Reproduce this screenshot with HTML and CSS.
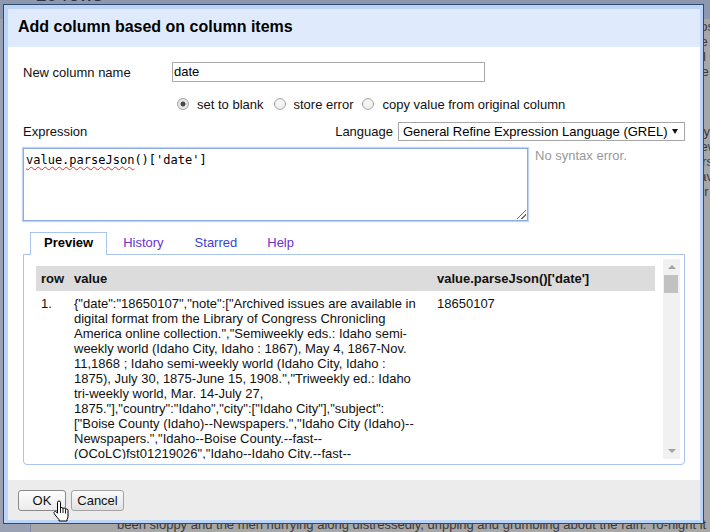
FILE: index.html
```html
<!DOCTYPE html>
<html>
<head>
<meta charset="utf-8">
<title>Add column based on column items</title>
<link rel="stylesheet" href="styles.css">
</head>
<body>
<div class="backdrop">
  <div class="bg-top"><span class="bg-rows">20 rows</span></div>
  <div class="bg-grid">
    <div class="bg-side"></div>
    <div class="bg-text">
      <p class="bg-filler">The weather has been very unpleasant for several days past, and the roads leading into town are almost impassable. Teams from the mines report heavy going, and many of the freighters have laid over at the crossing. Business on Main street has been dull, the merchants complaining that trade is at a standstill until the snow melts from the hills. A public meeting was held at the court house on Saturday evening for the purpose of taking steps toward the erection of a new school building. Judge Miller presided and a committee of five was appointed to solicit subscriptions. The stage from Boise arrived late on Tuesday, having been detained by high water at the ford. Among the passengers were several ladies bound for Placerville. The Independence Hose Company gave a ball at the hall on Friday night, which was largely attended and passed off pleasantly. Mining news from the upper creeks is encouraging, and several new claims have been located during the week. The ditch company expects to have water running by the first of next month. Mr. Jones, of the City Hotel, has refitted his dining room in handsome style. The streets have all day been sloppy and muddy, and the sidewalks crowded with miners down from the gulches waiting for the weather to clear.</p>
      <p class="bg-last">been sloppy and the men hurrying along distressedly, dripping and grumbling about the rain. To-night it is dolefully dolefully</p>
    </div>
  </div>
</div>

<div class="dialog">
  <div class="dialog-inner">
    <div class="title">Add column based on column items</div>
    <div class="body">
      <div class="row-name">
        <span class="label">New column name</span>
        <div class="input">date</div>
      </div>
      <div class="row-radios">
        <span class="radio on"></span><span class="rlabel">set to blank</span>
        <span class="radio"></span><span class="rlabel r2">store error</span>
        <span class="radio"></span><span class="rlabel">copy value from original column</span>
      </div>
      <div class="row-expr">
        <span class="grow">Expression</span>
        <span class="lang">Language</span>
        <div class="select"><span>General Refine Expression Language (GREL)</span><span class="arrow"></span></div>
      </div>
      <div class="row-code">
        <div class="code"><span class="squiggle">value.parseJson</span>()['date']</div>
        <div class="status">No syntax error.</div>
      </div>
      <div class="tabs">
        <span class="tab active">Preview</span>
        <span class="tab visited">History</span>
        <span class="tab link">Starred</span>
        <span class="tab visited">Help</span>
      </div>
      <div class="panel">
        <div class="preview">
          <table class="grid">
            <colgroup><col class="c-row"><col class="c-value"><col class="c-date"></colgroup>
            <thead>
              <tr><th>row</th><th>value</th><th>value.parseJson()['date']</th></tr>
            </thead>
            <tbody>
              <tr>
                <td>1.</td>
                <td class="json">{"date":"18650107","note":["Archived issues are available in<br>digital format from the Library of Congress Chronicling<br>America online collection.","Semiweekly eds.: Idaho semi-<br>weekly world (Idaho City, Idaho : 1867), May 4, 1867-Nov.<br>11,1868 ; Idaho semi-weekly world (Idaho City, Idaho :<br>1875), July 30, 1875-June 15, 1908.","Triweekly ed.: Idaho<br>tri-weekly world, Mar. 14-July 27,<br>1875."],"country":"Idaho","city":["Idaho City"],"subject":<br>["Boise County (Idaho)--Newspapers.","Idaho City (Idaho)--<br>Newspapers.","Idaho--Boise County.--fast--<br>(OCoLC)fst01219026","Idaho--Idaho City.--fast--<br>(OCoLC)fst01213962"]}</td>
                <td>18650107</td>
              </tr>
            </tbody>
          </table>
        </div>
        <div class="scrollbar">
          <span class="sb-btn"><span class="tri-up"></span></span>
          <span class="thumb"></span>
          <span class="sb-fill"></span>
          <span class="sb-btn"><span class="tri-down"></span></span>
        </div>
      </div>
    </div>
    <div class="footer">
      <button class="btn ok">OK</button>
      <button class="btn cancel">Cancel</button>
    </div>
  </div>
</div>

<svg class="cursor" width="17" height="22" viewBox="0 0 17 22">
  <path d="M4.5,2.5 Q4.5,1 6,1 Q7.5,1 7.5,2.5 L7.5,8.5 Q7.5,7.5 8.75,7.5 Q10,7.5 10,8.7 Q10,8 11.25,8 Q12.5,8 12.5,9.5 Q12.7,9 13.75,9 Q15,9 15,10.5 L15,16 Q15,18 14,19.5 L14,21 L6,21 L6,19.5 Q4.5,18 3,16 L1.2,13.5 Q0.5,12.3 1.6,11.6 Q2.6,11 3.5,12 L4.5,13.2 Z" fill="#fff" stroke="#000" stroke-width="1" stroke-linejoin="round"/>
  <path d="M7.5,8.5 L7.5,13 M10,8.7 L10,13 M12.5,9.5 L12.5,13.5" fill="none" stroke="#000" stroke-width="0.9"/>
</svg>
</body>
</html>
```
FILE: styles.css
```css
html, body {
  margin: 0;
  padding: 0;
}
body {
  width: 710px;
  height: 532px;
  overflow: hidden;
  background: #8e97b0;
  font-family: "Liberation Sans", Arial, sans-serif;
  font-size: 13px;
  color: #111;
}

/* ---------- backdrop (page under the dialog) ---------- */
.backdrop {
  width: 710px;
  height: 532px;
  overflow: hidden;
}
.bg-top {
  height: 19px;
  background: #8e97b0;
  padding-left: 36px;
  overflow: hidden;
}
.bg-rows {
  display: block;
  font-size: 19px;
  line-height: 19px;
  margin-top: -15px;
  color: #2c3246;
}
.bg-grid {
  display: flex;
  height: 513px;
  background: #a7a7a7;
}
.bg-side {
  width: 30px;
  flex: none;
  background: #9aa1b5;
  border-right: 1px solid #7f89a2;
}
.bg-text {
  flex: 1;
  padding-left: 86px;
  display: flex;
  flex-direction: column;
  overflow: hidden;
  color: #3a3a3a;
}
.bg-filler {
  margin: 0;
  width: 620px;
  height: 498px;
  overflow: hidden;
  line-height: 15px;
}
.bg-last {
  margin: 0;
  white-space: nowrap;
  line-height: 15px;
}

/* ---------- dialog ---------- */
.dialog {
  position: absolute;
  left: 3px;
  top: 4px;
  width: 701px;
  height: 520px;
  box-sizing: border-box;
  border: 1px solid #2f4a6a;
  background: #bcd4f7;
  padding: 4px 3px 3px 4px;
}
.dialog-inner {
  display: flex;
  flex-direction: column;
  height: 100%;
}
.title {
  flex: none;
  height: 38px;
  line-height: 36px;
  background: #dfebfd;
  padding-left: 10px;
  font-weight: bold;
  font-size: 16px;
  color: #000;
}
.body {
  flex: none;
  height: 433px;
  box-sizing: border-box;
  background: #fff;
  padding: 15px;
}

.row-name {
  display: grid;
  grid-template-columns: 149px 313px;
  align-items: center;
  height: 20px;
}
.input {
  box-sizing: border-box;
  height: 20px;
  border: 1px solid #a9a9a9;
  padding: 0 1px;
  line-height: 18px;
  color: #000;
}

.row-radios {
  margin-top: 14px;
  height: 16px;
  display: flex;
  align-items: center;
  padding-left: 154px;
}
.radio {
  box-sizing: border-box;
  width: 12px;
  height: 12px;
  border-radius: 50%;
  border: 1px solid #a8a8a8;
  background: radial-gradient(circle at 50% 40%, #fbfbfb 0%, #e4e4e4 100%);
  margin-right: 8px;
  flex: none;
}
.radio.on {
  background: radial-gradient(circle, #4a4a4a 0, #4a4a4a 2.2px, #e9e9e9 2.8px, #dcdcdc 100%);
}
.rlabel {
  margin-right: 10px;
}
.rlabel.r2 {
  margin-right: 9px;
}

.row-expr {
  margin-top: 10px;
  height: 19px;
  display: flex;
  align-items: center;
}
.grow {
  flex: 1;
}
.lang {
  margin-right: 5px;
}
.select {
  box-sizing: border-box;
  width: 287px;
  height: 19px;
  border: 1px solid #a6a6a6;
  padding: 0 6px 0 4px;
  display: flex;
  align-items: center;
  justify-content: space-between;
  color: #000;
}
.arrow {
  width: 0;
  height: 0;
  border-left: 3.5px solid transparent;
  border-right: 3.5px solid transparent;
  border-top: 5px solid #111;
}

.row-code {
  margin-top: 7px;
  display: flex;
  gap: 7px;
}
.code {
  position: relative;
  box-sizing: border-box;
  width: 505px;
  height: 73px;
  border: 1px solid #8aaae0;
  box-shadow: 0 0 1px 1px #c2d6f6;
  padding: 4px 2px;
  font-family: "DejaVu Sans Mono", "Liberation Mono", monospace;
  font-size: 12px;
  color: #000;
}
.code::after {
  content: "";
  position: absolute;
  right: 1px;
  bottom: 1px;
  width: 9px;
  height: 9px;
  background: linear-gradient(135deg, transparent 0, transparent 46%, #6f6f6f 46%, #6f6f6f 54%, transparent 54%, transparent 72%, #6f6f6f 72%, #6f6f6f 80%, transparent 80%);
}
.squiggle {
  text-decoration: underline wavy #e03030;
  text-decoration-thickness: 1px;
  text-underline-offset: 2px;
}
.status {
  color: #999;
  line-height: 15px;
}

.tabs {
  margin-top: 11px;
  height: 22px;
  display: flex;
  padding-left: 7px;
  position: relative;
  z-index: 1;
}
.tab {
  padding: 0 14px;
  margin-left: 2px;
  line-height: 22px;
}
.tab.active {
  box-sizing: border-box;
  height: 23px;
  margin-left: 0;
  padding: 0 13px;
  border: 1px solid #a8c4ef;
  border-bottom: none;
  background: #fff;
  font-weight: bold;
  line-height: 20px;
  color: #000;
}
.tab.visited {
  color: #6c2fd4;
}
.tab.link {
  color: #3c3fd4;
  margin-left: 3px;
}

.panel {
  box-sizing: border-box;
  height: 211px;
  border: 1px solid #a8c4ef;
  border-radius: 0 0 4px 4px;
  padding: 4px 4px 5px 4px;
  display: flex;
}
.preview {
  flex: 1;
  height: 200px;
  overflow: hidden;
  padding: 7px 0 0 8px;
  box-sizing: border-box;
}
.grid {
  border-collapse: collapse;
  table-layout: fixed;
  width: 619px;
}
.c-row { width: 33px; }
.c-value { width: 363px; }
.c-date { width: 223px; }
.grid th {
  background: #dcdcdc;
  height: 25px;
  padding: 0 5px;
  text-align: left;
  font-weight: bold;
  color: #111;
}
.grid td {
  padding: 5px 5px;
  vertical-align: top;
  line-height: 15px;
  color: #111;
}
.grid td.json {
  white-space: nowrap;
}

.scrollbar {
  flex: none;
  width: 17px;
  height: 200px;
  margin-left: 7px;
  background: #f1f1f1;
  display: flex;
  flex-direction: column;
}
.sb-btn {
  height: 16px;
  flex: none;
  display: flex;
  align-items: center;
  justify-content: center;
}
.tri-up {
  width: 0;
  height: 0;
  border-left: 4px solid transparent;
  border-right: 4px solid transparent;
  border-bottom: 4px solid #a3a3a3;
}
.tri-down {
  width: 0;
  height: 0;
  border-left: 4px solid transparent;
  border-right: 4px solid transparent;
  border-top: 4px solid #a3a3a3;
}
.thumb {
  height: 18px;
  flex: none;
  margin: 0 2px 0 1px;
  background: #c1c1c1;
}
.sb-fill {
  flex: 1;
}

.footer {
  flex: 1;
  background: #ececec;
  padding: 10px 0 0 10px;
  display: flex;
  align-items: flex-start;
  gap: 5px;
}
.btn {
  box-sizing: border-box;
  height: 21px;
  border: 1px solid #a3a3a3;
  border-radius: 3px;
  background: linear-gradient(#fafafa, #e2e2e2);
  font-family: "Liberation Sans", Arial, sans-serif;
  font-size: 13px;
  color: #111;
  padding: 0;
  margin: 0;
}
.btn.ok {
  width: 48px;
  border-color: #8a8a8a;
  background: linear-gradient(#fdfdfd, #ebebeb);
}
.btn.cancel {
  width: 53px;
}

.cursor {
  position: absolute;
  left: 53px;
  top: 500px;
}
```
